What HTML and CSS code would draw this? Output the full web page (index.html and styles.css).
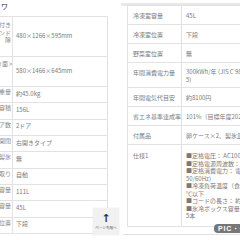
FILE: index.html
```html
<!DOCTYPE html>
<html lang="ja">
<head>
<meta charset="utf-8">
<link rel="stylesheet" href="styles.css">
</head>
<body>
<div class="screen">
  <section class="panel left">
    <div class="ttl">ワ</div>
    <div class="spec">
      <div class="row r1"><div class="lab">ハンドル付き<br>スタンド<br>取っ手　除</div><div class="val">480×1266×595mm</div></div>
      <div class="row r2"><div class="lab">梱包幅×奥行き面×</div><div class="val">580×1466×645mm</div></div>
      <div class="row"><div class="lab">重量</div><div class="val">約45.0kg</div></div>
      <div class="row"><div class="lab">定格内容積</div><div class="val">156L</div></div>
      <div class="row"><div class="lab">ドア数</div><div class="val">2ドア</div></div>
      <div class="row"><div class="lab">ドア開閉</div><div class="val">右開きタイプ</div></div>
      <div class="row"><div class="lab">製氷</div><div class="val">無</div></div>
      <div class="row"><div class="lab">霜取り</div><div class="val">自動</div></div>
      <div class="row"><div class="lab">冷蔵室容量</div><div class="val">111L</div></div>
      <div class="row"><div class="lab">冷凍室容量</div><div class="val">45L</div></div>
      <div class="row"><div class="lab">冷凍室位置</div><div class="val">下段</div></div>
    </div>
    <a class="totop" href="#"><span class="arrow">↑</span><span class="totop-txt">ページ先頭へ</span></a>
  </section>
  <section class="panel right">
    <div class="spec2">
      <div class="row2"><div class="lab2">冷凍室容量</div><div class="val2">45L</div></div>
      <div class="row2"><div class="lab2">冷凍室位置</div><div class="val2">下段</div></div>
      <div class="row2"><div class="lab2">野菜室位置</div><div class="val2">無</div></div>
      <div class="row2"><div class="lab2">年間消費電力量</div><div class="val2">300kWh/年 (JIS C 9801-3:201<br>5)</div></div>
      <div class="row2"><div class="lab2">年間電気代目安</div><div class="val2">約8100円</div></div>
      <div class="row2"><div class="lab2">省エネ基準達成率</div><div class="val2">101%（目標年度2021年）</div></div>
      <div class="row2"><div class="lab2">付属品</div><div class="val2">卵ケース×2、製氷皿、取扱説明書</div></div>
      <div class="row2 tall"><div class="lab2">仕様1</div><div class="val2">■定格電圧： AC100V<br>■定格電源周波数： 50/60Hz<br>■定格消費電力： 電動機 90W（<br>50/60Hz)<br>■冷凍負荷温度（食品）： -18<br>℃以下<br>■コードの長さ： 約1.8m<br>■氷冷ボックス容量： 約500ml×<br>5本</div></div>
    </div>
    <div class="foot"></div>
    <span class="badge">PIC・CHANGE</span>
  </section>
</div>
</body>
</html>
```

FILE: styles.css
```css
* { box-sizing: border-box; }
html, body { margin: 0; padding: 0; background: #fff; }
body {
  width: 240px;
  height: 240px;
  overflow: hidden;
  font-family: "Noto Sans CJK JP", "Liberation Sans", sans-serif;
  color: #7a7a7a;
  font-size: 6px;
}
.screen { display: flex; width: 240px; height: 240px; }
.panel { position: relative; height: 240px; overflow: hidden; background: #fff; }
.left { width: 121px; flex: none; }
.right { width: 119px; flex: none; }

.ttl { font-size: 7px; color: #333; line-height: 10px; padding: 1px 0 0 1px; height: 16px; }

.spec { margin-left: -40px; width: 148px; border-top: 1px solid #e2e2e2; border-right: 1px solid #e2e2e2; }
.row { display: flex; height: 16.33px; border-bottom: 1px solid #e2e2e2; }
.row.r1 { height: 40px; }
.row.r2 { height: 30px; }
.lab { width: 53px; flex: none; border-right: 1px solid #e2e2e2; text-align: right; white-space: nowrap; padding: 1px 1px 0 0; line-height: 7.5px; color: #888; overflow: hidden; }
.r1 .lab { padding-top: 4px; }
.r2 .lab { padding-top: 3px; }
.val { display: flex; align-items: center; padding: 0 0 2px 3px; white-space: nowrap; line-height: 8px; }

.totop {
  position: absolute; left: 93px; top: 208px; width: 26px; height: 27px;
  background: #f1f1f1; box-shadow: 0 0 1px rgba(0,0,0,.15);
  display: flex; flex-direction: column; align-items: center; justify-content: center;
  text-decoration: none; color: #333;
}
.arrow { font-size: 11px; line-height: 11px; font-weight: bold; font-family: "DejaVu Sans", sans-serif; }
.totop-txt { font-size: 4px; line-height: 5px; color: #555; margin-top: 1px; white-space: nowrap; transform: scale(0.9); }

.right { padding-top: 5px; }
.right::before { content: ""; position: absolute; left: 0; right: 0; top: 3px; height: 3px; background: #e8e8e8; }
.spec2 { position: relative; margin-left: 6px; width: 160px; border-left: 1px solid #e2e2e2; border-top: 1px solid #e2e2e2; }
.row2 { display: flex; border-bottom: 1px solid #e2e2e2; }
.lab2 { width: 54px; flex: none; border-right: 1px solid #e2e2e2; padding: 6px 0 4px 5px; line-height: 8px; white-space: nowrap; color: #7a7a7a; }
.val2 { padding: 6px 0 4px 4px; line-height: 7.5px; white-space: nowrap; }
.row2:nth-child(4) .val2 { padding-top: 5px; }
.tall .lab2, .tall .val2 { padding-top: 7px; padding-bottom: 6px; }
.foot { height: 8px; border-bottom: 1px solid #e2e2e2; margin-left: 2px; }
.badge {
  position: absolute; left: 93px; top: 224px; height: 9px; padding: 0 3px 0 4px;
  background: #777; color: #fff; font-weight: bold; font-size: 7px; line-height: 9px;
  font-family: "Liberation Sans", sans-serif;
  letter-spacing: 0.8px; white-space: nowrap; border-radius: 4px 0 0 4px;
}
```
